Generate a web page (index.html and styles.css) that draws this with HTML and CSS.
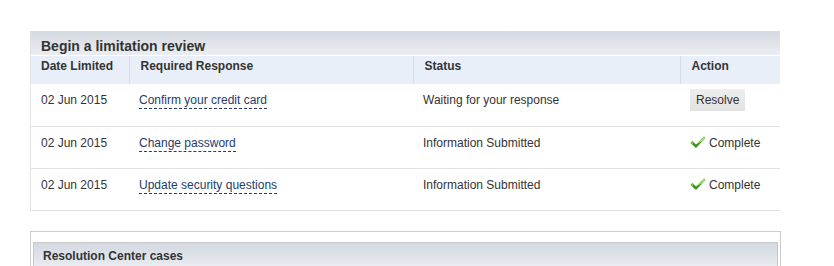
FILE: index.html
```html
<!DOCTYPE html>
<html lang="en">
<head>
    <meta charset="UTF-8">
    <title>Limitation review</title>
    <link rel="stylesheet" href="styles.css">
</head>
<body>
    <div class="panel">
        <div class="panel-title">Begin a limitation review</div>
        <table class="review">
            <thead>
                <tr>
                    <th class="col-date">Date Limited</th>
                    <th class="col-resp">Required Response</th>
                    <th class="col-status">Status</th>
                    <th class="col-action">Action</th>
                </tr>
            </thead>
            <tbody>
                <tr>
                    <td>02 Jun 2015</td>
                    <td><a href="#" class="task">Confirm your credit card</a></td>
                    <td>Waiting for your response</td>
                    <td><button class="resolve">Resolve</button></td>
                </tr>
                <tr>
                    <td>02 Jun 2015</td>
                    <td><a href="#" class="task">Change password</a></td>
                    <td>Information Submitted</td>
                    <td>
                        <span class="done">
                            <svg width="16" height="13" viewBox="0 0 16 13">
                                <path d="M0.5 7 L2.5 5 L6 8.5 L14 0.5 L15.5 2 L6 12 Z" fill="#3f8f22"/>
                                <path d="M6 8.5 L14 0.5 L15.5 2 L12.5 5 Z" fill="#a6dc74"/>
                                <path d="M0.5 7 L2.5 5 L4 6.5 L2.5 8.5 Z" fill="#7cc24e"/>
                            </svg>
                            Complete
                        </span>
                    </td>
                </tr>
                <tr>
                    <td>02 Jun 2015</td>
                    <td><a href="#" class="task">Update security questions</a></td>
                    <td>Information Submitted</td>
                    <td>
                        <span class="done">
                            <svg width="16" height="13" viewBox="0 0 16 13">
                                <path d="M0.5 7 L2.5 5 L6 8.5 L14 0.5 L15.5 2 L6 12 Z" fill="#3f8f22"/>
                                <path d="M6 8.5 L14 0.5 L15.5 2 L12.5 5 Z" fill="#a6dc74"/>
                                <path d="M0.5 7 L2.5 5 L4 6.5 L2.5 8.5 Z" fill="#7cc24e"/>
                            </svg>
                            Complete
                        </span>
                    </td>
                </tr>
            </tbody>
        </table>
    </div>

    <div class="box">
        <div class="box-title">Resolution Center cases</div>
    </div>
</body>
</html>
```

FILE: styles.css
```css
body {
    margin: 0;
    padding: 31px 55px 0 30px;
    font-family: 'Liberation Sans', Arial, sans-serif;
    font-size: 12px;
    color: #333;
    background: #fff;
}
.panel {
    width: 749px;
    border-left: 1px solid #e2e2e2;
    border-bottom: 1px solid #e2e2e2;
}
.panel-title {
    height: 24px;
    line-height: 30px;
    padding-left: 10px;
    font-size: 14px;
    font-weight: bold;
    color: #333;
    background: linear-gradient(#d4dae2, #ebedf0);
    border-bottom: 1px solid #fff;
}
.review {
    width: 100%;
    border-collapse: collapse;
}
.review th {
    height: 28px;
    padding: 3px 10px 0 11px;
    text-align: left;
    vertical-align: top;
    font-weight: bold;
    background: #e8eff8;
    border-left: 1px solid #d6dde6;
    box-sizing: border-box;
}
.review th:first-child {
    padding-left: 10px;
    border-left: none;
}
.review td {
    height: 42px;
    padding: 9px 10px 0;
    vertical-align: top;
    border-top: 1px solid #e2e2e2;
    box-sizing: border-box;
}
.review tbody tr:first-child td {
    border-top: none;
}
.col-date { width: 98px; }
.col-resp { width: 284px; }
.col-status { width: 267px; }
.task {
    color: #243b6c;
    text-decoration: none;
    border-bottom: 1px dashed #243b6c;
    padding-bottom: 1px;
}
.resolve {
    margin-top: -5px;
    height: 22px;
    padding: 0 6px;
    font-family: 'Liberation Sans', Arial, sans-serif;
    font-size: 12px;
    color: #333;
    border: none;
    background: linear-gradient(#eeeeee, #e2e2e2);
}
.done {
    display: inline-flex;
    align-items: center;
    gap: 3px;
}
.box {
    width: 745px;
    margin-top: 20px;
    padding: 10px 2px 0;
    height: 24px;
    border: 1px solid #cccccc;
    border-bottom: none;
}
.box-title {
    height: 24px;
    line-height: 27px;
    padding-left: 9px;
    font-weight: bold;
    color: #333;
    background: linear-gradient(#d3d9e2, #e9ecf0);
    border: 1px solid #c8c8c8;
    border-bottom: none;
}
```
